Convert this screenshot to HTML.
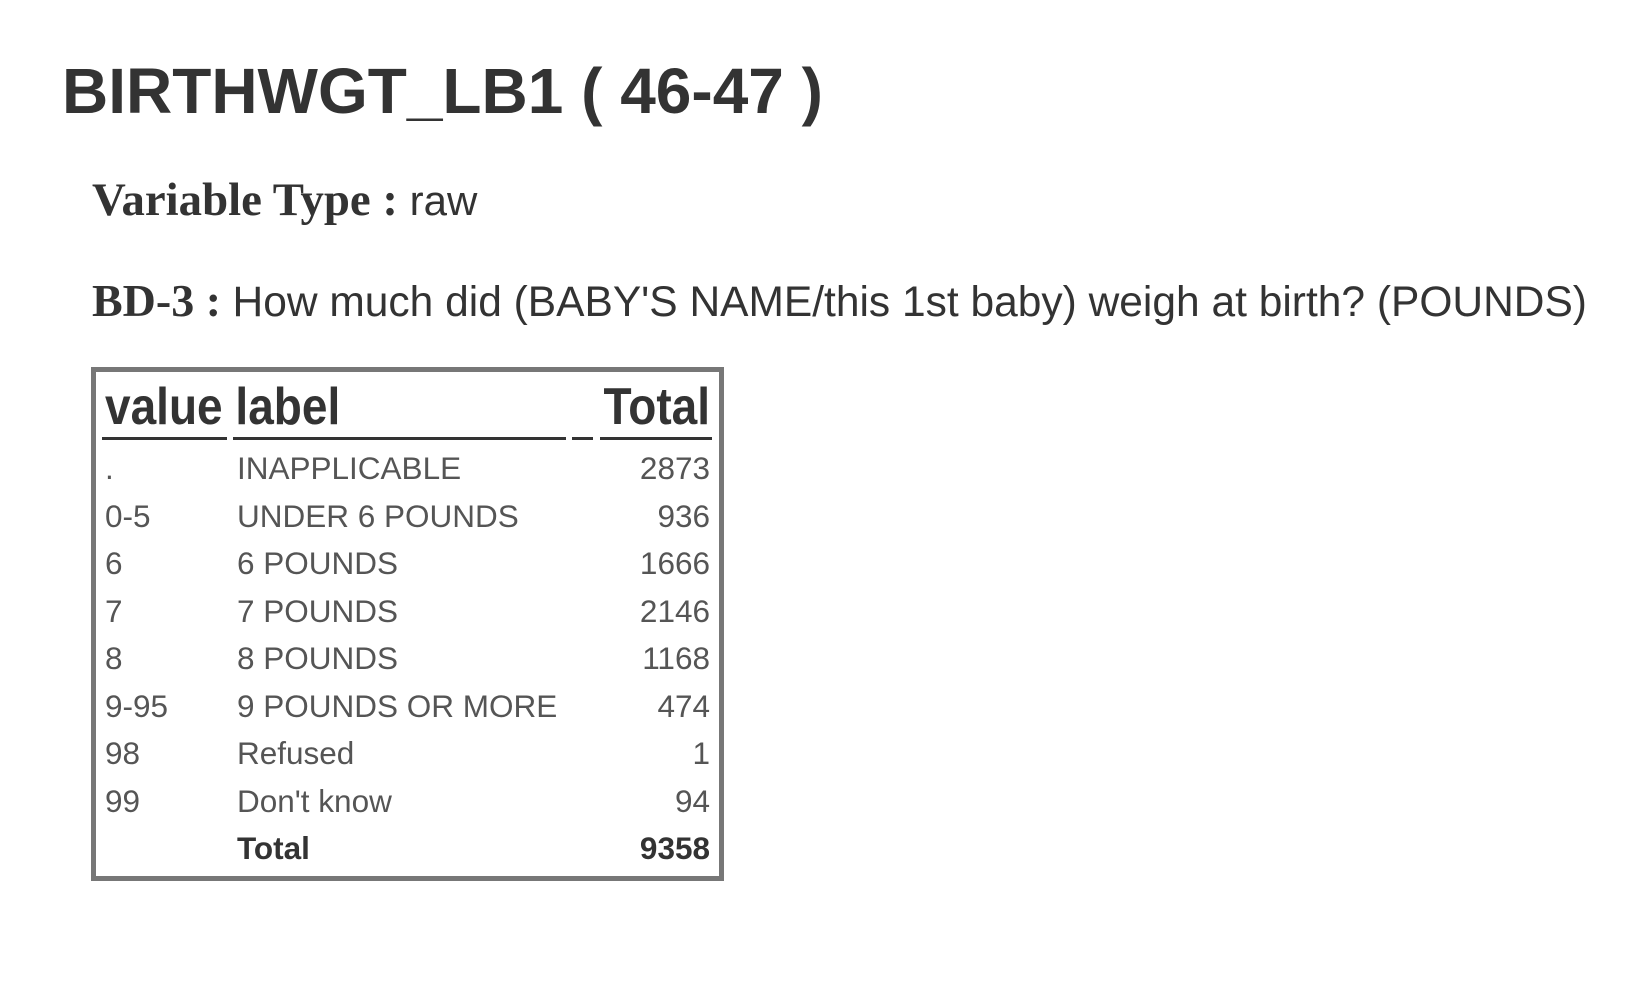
<!DOCTYPE html>
<html><head><meta charset="utf-8"><style>
html,body{margin:0;padding:0;background:#fff;width:1626px;height:1004px;overflow:hidden;position:relative}
.a{position:absolute;white-space:nowrap;line-height:1}
.s{font-family:"Liberation Sans",sans-serif}
.f{font-family:"Liberation Serif",serif;font-weight:bold}
.r{text-align:right}
.c{color:#555;font-size:31.5px}
.u{position:absolute;height:3px;background:#333;top:437px}
</style></head><body>
<div class="a s" style="left:62px;top:59px;font-size:64px;font-weight:bold;color:#333">BIRTHWGT_LB1 ( 46-47 )</div>
<div class="a" style="left:92px;top:177px;font-size:46.8px;color:#333"><span class="f">Variable Type :</span> <span class="s" style="font-size:42px">raw</span></div>
<div class="a" style="left:92px;top:278px;font-size:46px;color:#333"><span class="f">BD-3 :</span> <span class="s" style="font-size:42.5px">How much did (BABY'S NAME/this 1st baby) weigh at birth? (POUNDS)</span></div>
<div style="position:absolute;left:91px;top:367px;width:623px;height:504px;border:5px solid #777"></div>
<div class="a s" style="left:105px;top:386px;font-size:46px;font-weight:bold;color:#333;transform:scaleY(1.12);transform-origin:0 100%">value label</div>
<div class="a s r" style="right:916px;top:386px;font-size:46px;font-weight:bold;color:#333;transform:scaleY(1.12);transform-origin:0 100%">Total</div>
<div class="u" style="left:102px;width:125px"></div>
<div class="u" style="left:233px;width:333px"></div>
<div class="u" style="left:572px;width:21px"></div>
<div class="u" style="left:600px;width:112px"></div>
<div class="a s c" style="left:105px;top:445px;line-height:47.5px">
.<br>0-5<br>6<br>7<br>8<br>9-95<br>98<br>99</div>
<div class="a s c" style="left:237px;top:445px;line-height:47.5px">
INAPPLICABLE<br>UNDER 6 POUNDS<br>6 POUNDS<br>7 POUNDS<br>8 POUNDS<br>9 POUNDS OR MORE<br>Refused<br>Don't know<br><b style="color:#333">Total</b></div>
<div class="a s c r" style="right:916px;top:445px;line-height:47.5px">
2873<br>936<br>1666<br>2146<br>1168<br>474<br>1<br>94<br><b style="color:#333">9358</b></div>
</body></html>
